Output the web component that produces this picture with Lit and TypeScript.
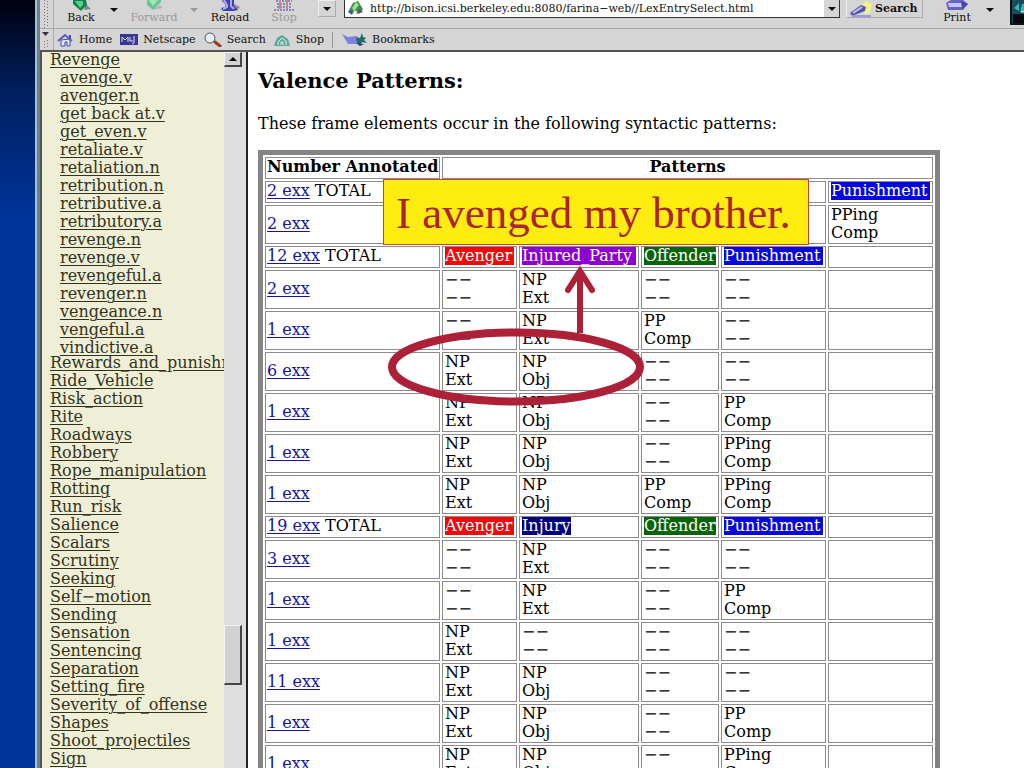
import { LitElement, html, css, svg, nothing } from "lit";
import { customElement } from "lit/decorators.js";

type Cell = string;
interface Row { count: string; total?: boolean; cells: Cell[]; }

const LEMMAS = ["avenge.v", "avenger.n", "get back at.v", "get_even.v", "retaliate.v", "retaliation.n", "retribution.n", "retributive.a", "retributory.a", "revenge.n", "revenge.v", "revengeful.a", "revenger.n", "vengeance.n", "vengeful.a", "vindictive.a"];
const FRAMES = ["Rewards_and_punishments", "Ride_Vehicle", "Risk_action", "Rite", "Roadways", "Robbery", "Rope_manipulation", "Rotting", "Run_risk", "Salience", "Scalars", "Scrutiny", "Seeking", "Self−motion", "Sending", "Sensation", "Sentencing", "Separation", "Setting_fire", "Severity_of_offense", "Shapes", "Shoot_projectiles", "Sign"];

const NONE = "−−|−−";
const ROWS: Row[] = [
  { count: "2 exx", total: true, cells: ["", "", "", "", "Punishment"] },
  { count: "2 exx", cells: ["", "", "", "", "PPing|Comp"] },
  { count: "12 exx", total: true, cells: ["Avenger", "Injured_Party", "Offender", "Punishment", ""] },
  { count: "2 exx", cells: [NONE, "NP|Ext", NONE, NONE, ""] },
  { count: "1 exx", cells: [NONE, "NP|Ext", "PP|Comp", NONE, ""] },
  { count: "6 exx", cells: ["NP|Ext", "NP|Obj", NONE, NONE, ""] },
  { count: "1 exx", cells: ["NP|Ext", "NP|Obj", NONE, "PP|Comp", ""] },
  { count: "1 exx", cells: ["NP|Ext", "NP|Obj", NONE, "PPing|Comp", ""] },
  { count: "1 exx", cells: ["NP|Ext", "NP|Obj", "PP|Comp", "PPing|Comp", ""] },
  { count: "19 exx", total: true, cells: ["Avenger", "Injury", "Offender", "Punishment", ""] },
  { count: "3 exx", cells: [NONE, "NP|Ext", NONE, NONE, ""] },
  { count: "1 exx", cells: [NONE, "NP|Ext", NONE, "PP|Comp", ""] },
  { count: "1 exx", cells: ["NP|Ext", NONE, NONE, NONE, ""] },
  { count: "11 exx", cells: ["NP|Ext", "NP|Obj", NONE, NONE, ""] },
  { count: "1 exx", cells: ["NP|Ext", "NP|Obj", NONE, "PP|Comp", ""] },
  { count: "1 exx", cells: ["NP|Ext", "NP|Obj", NONE, "PPing|Comp", ""] },
];

const caret = svg`<path d="M0 0h8l-4 4z" fill="currentColor"/>`;

@customElement("browser-toolbar")
export class BrowserToolbar extends LitElement {
  static styles = css`
    :host { display: block; background: #d5d5d5; color: #111; font: 11px/14px "DejaVu Serif", serif; border-bottom: 2px solid #555; }
    button { font: inherit; color: inherit; background: none; border: 0; padding: 0; flex: none; }
    svg { display: block; flex: none; }
    .shell { display: grid; grid-template-columns: 13px 1fr; }
    .grip { border-right: 1px solid #aaa; }
    .main { min-width: 0; }
    .nav { display: flex; height: 28px; padding-left: 12px; overflow: hidden; border-bottom: 1px solid #a8a8a8; }
    .tool { display: flex; flex-direction: column; align-items: center; height: 26px; }
    .dim { color: #999; }
    .more { align-self: flex-start; padding-top: 8px; width: 8px; margin: 0 13px; }
    .back { width: 32px; }
    .forward { width: 46px; }
    .reload { width: 38px; }
    .stop { width: 26px; margin-left: 22px; }
    .drop { display: grid; place-items: center; height: 17px; width: 18px; margin-left: 21px; border: 1px solid #aaa; border-top-color: #eee; border-left-color: #eee; box-sizing: border-box; }
    .address { display: flex; flex: 1; height: 18px; margin-left: 8px; background: #fff; border: 1px solid #333; border-top: 0; min-width: 0; box-sizing: border-box; }
    .address svg { margin: 0 3px 0 1px; }
    .address input { flex: 1; min-width: 0; border: 0; padding: 0 2px; background: none; font: 11px/16px "DejaVu Serif", serif; color: #111; outline: 0; }
    .address button { width: 15px; background: #d5d5d5; display: grid; place-items: center; }
    .address button svg { margin: 0; }
    .search { display: flex; align-items: center; gap: 2px; height: 18px; width: 77px; margin-left: 6px; border: 1px solid #aaa; border-top: 0; border-left-color: #eee; font-weight: bold; box-sizing: border-box; }
    .print { width: 32px; margin-left: 18px; }
    .logo { margin-left: 3px; }
    .links { display: flex; align-items: center; height: 21px; padding-left: 4px; }
    .links a { display: flex; align-items: center; gap: 5px; color: inherit; text-decoration: none; margin-right: 8px; }
    .sep { width: 1px; height: 16px; background: #999; margin-right: 9px; }
  `;
  render() {
    return html`
      <div class="shell">
        <svg class="grip" width="13" height="50" viewBox="0 0 13 50">
          <g fill="none" stroke="#777" stroke-dasharray="1 2"><path d="M4.500 0v28M7.500 1v27M4.500 41v7M7.500 40v8"/></g>
          <path d="M2 32h7l-3.500 4z" fill="#334"/><path d="M0 28.500h13" stroke="#a8a8a8"/>
        </svg>
        <div class="main">
          <div class="nav">
            <button class="tool back">
              <svg width="20" height="11" viewBox="0 0 20 11"><path d="m13 10 7-1-5-5z" fill="#85858f"/><path d="M10 11 2 4V0h13l1 5z" fill="#14804a"/><path d="M4 1h8v4l-3 3z" fill="#56d08a"/></svg>
              <span>Back</span></button>
            <button class="more" aria-label="Back history"><svg width="8" height="4">${caret}</svg></button>
            <button class="tool forward dim">
              <svg width="20" height="11" viewBox="0 0 20 11"><path d="m8 10 11-2-3-3z" fill="#b4b4b8"/><path d="m9 10 8-8V0H3v5z" fill="#6cc490"/><path d="M5 0h9l-5 6z" fill="#a4e6bc"/></svg>
              <span>Forward</span></button>
            <button class="more dim" aria-label="Forward history"><svg width="8" height="4">${caret}</svg></button>
            <button class="tool reload">
              <svg width="22" height="11" viewBox="0 0 22 11"><path d="M1 10h17l3-3-6-3z" fill="#8d8d9c"/><path d="M3 0c1 3 5 4 3 7L2 8l2 3h11l4-1-4-4V0z" fill="#3f3fae"/><path d="M5 0c1 3 4 4 3 7l-4 2M12 0v6l3 3" fill="none" stroke="#a9a9f4" stroke-width="2"/></svg>
              <span>Reload</span></button>
            <button class="tool stop dim">
              <svg width="22" height="11" viewBox="0 0 22 11"><path d="M3 1h16M4 4h14M4 7h14M1 10h20" stroke="#8f86b4" stroke-width="2" stroke-dasharray="2 1"/><path d="M7 0v9M14 0v9" stroke="#b98a96" stroke-width="2"/></svg>
              <span>Stop</span></button>
            <button class="drop" aria-label="Page proxy"><svg width="8" height="4">${caret}</svg></button>
            <div class="address">
              <svg width="19" height="16" viewBox="0 0 17 16"><path d="m1 12 5-9 5-2 5 8-4 5-4-4-3 5z" fill="#3c8c55"/><path d="m5 8 4-6 3 3-5 6z" fill="#9be37c"/><path d="m9 14 7-2-3-3z" fill="#556"/><path d="m1 12 4-2v4z" fill="#4c4ca8"/></svg>
              <input aria-label="Location" value="http://bison.icsi.berkeley.edu:8080/farina−web//LexEntrySelect.html">
              <button aria-label="Show history"><svg width="8" height="4">${caret}</svg></button>
            </div>
            <button class="search">
              <svg width="26" height="16" viewBox="0 0 26 16"><path d="m14 5 5-5 6 3-2 9-5 1z" fill="#f6f08a"/><path d="m3 12 11-8 5 2-1 4-13 5z" fill="#5656a8"/><path d="m6 12 9-6" stroke="#c5c5f2" stroke-width="2"/><path d="M5 15h19" stroke="#9c9cd8" stroke-width="2"/></svg>
              <span>Search</span></button>
            <button class="tool print">
              <svg width="26" height="11" viewBox="0 0 26 11"><path d="M2 3 7 0h12l5 4-5 6H4z" fill="#6464bc"/><path d="M4 3h14v4H5z" fill="#c4c4fa"/><path d="m17 1 7 3-6 5z" fill="#4646a0"/></svg>
              <span>Print</span></button>
            <button class="more" aria-label="Print options"><svg width="8" height="4">${caret}</svg></button>
            <svg class="logo" width="14" height="25" viewBox="0 0 14 25"><path d="M0 0h14v25H0z" fill="#111"/><path d="M2 0h12v23H2z" fill="#174d5c"/><path d="M3 14h11v9H3z" fill="#050a12"/><path d="m4 8 5-5v8zM12 4h2v8h-4" fill="#39b3ba"/><path d="M11 12h3" stroke="#fff"/></svg>
          </div>
          <div class="links">
            <a href="#"><svg width="17" height="14" viewBox="0 0 17 14"><path d="M4 7v6h4V9h2v4h3V6z" fill="#e4e4ff" stroke="#4b4ba6"/><path d="M1 8 8 2l7 6" fill="none" stroke="#5b5bc0" stroke-width="2"/><path d="M12 2h2v4h-2z" fill="#4b4ba6"/></svg>Home</a>
            <a href="#"><svg width="18" height="11" viewBox="0 0 18 11"><path d="M0 0h18v11H0z" fill="#383891"/><path d="M2 8V3l3 3 3-3v5M10 3v4h3M14 2v7l-2 1" fill="none" stroke="#dfe0ff"/></svg>Netscape</a>
            <a href="#"><svg width="18" height="15" viewBox="0 0 18 15"><circle cx="6" cy="6" r="5" fill="#e4eef8" stroke="#555"/><path d="m11 10 5 4" stroke="#9b3820" stroke-width="3" stroke-linecap="round"/></svg>Search</a>
            <a href="#"><svg width="17" height="14" viewBox="0 0 17 14"><path d="m0 12 3-7 5-3 6 4 2 7H1z" fill="#5fa89a"/><path d="M4 12V9l4-4 4 3v4M7 12V9h2v3" fill="none" stroke="#dff4ee"/></svg>Shop</a>
            <span class="sep"></span>
            <a href="#"><svg width="25" height="15" viewBox="0 0 25 15"><path d="m0 2 6 3 9-1v8H6z" fill="#8181e2"/><path d="m14 5 4 1 2-5 1 4 3 1-2 2 3 3-5-1-2 4-3-3z" fill="#1f6c68"/><path d="m14 11 8 1-4 2z" fill="#34348a"/></svg>Bookmarks</a>
          </div>
        </div>
      </div>`;
  }
}

@customElement("frame-index")
export class FrameIndex extends LitElement {
  static styles = css`
    :host { display: grid; grid-template-columns: 1fr 18px; background: #efefd8; border-left: 2px solid #555; border-right: 4px solid #dedede; overflow: hidden; font: 16px/18px "DejaVu Serif", serif; }
    nav { overflow: hidden; padding-left: 8px; white-space: nowrap; }
    ul { list-style: none; margin: 0; padding: 0; }
    nav > ul { margin-top: -1px; }
    .lemmas { padding-left: 10px; margin-bottom: -3px; }
    a { color: #33331a; text-underline-offset: 2px; text-decoration-thickness: 1px; }
    .bar { display: grid; grid-template-rows: 15px 1fr 60px 83px; background: #dedede; }
    .bar button, .thumb { background: #d2d2d2; border: 1px solid #f4f4f4; border-right: 2px solid #444; border-bottom: 2px solid #444; padding: 0; display: grid; place-items: center; box-sizing: border-box; }
    .thumb { grid-row: 3; }
  `;
  render() {
    return html`
      <nav><ul>
        <li><a href="#">Revenge</a>
          <ul class="lemmas">${LEMMAS.map((l) => html`<li><a href="#">${l}</a></li>`)}</ul></li>
        ${FRAMES.map((f) => html`<li><a href="#">${f}</a></li>`)}
      </ul></nav>
      <div class="bar"><button aria-label="Scroll up"><svg width="8" height="4"><path d="M0 4h8L4 0z"/></svg></button><div class="thumb"></div></div>`;
  }
}

@customElement("valence-page")
export class ValencePage extends LitElement {
  static styles = css`
    :host { display: block; background: #fff; color: #000; overflow: hidden; padding: 17px 10px 0; font: 16px/18px "DejaVu Serif", serif; }
    h1 { font-size: 21px; line-height: 24px; margin: 0 0 22px; }
    p { margin: 0 0 17px; }
    table { table-layout: fixed; width: 682px; border: 5px solid #848484; border-spacing: 2px; border-collapse: separate; }
    th, td { border: 1px solid #8c8c8c; padding: 0 1px 2px; overflow: hidden; white-space: nowrap; text-align: left; }
    th { text-align: center; }
    .c0 { width: 175px; } .c1 { width: 75px; } .c2 { width: 120px; } .c3 { width: 78px; } .c4 { width: 105px; }
    a { color: #1414a0; text-underline-offset: 2px; text-decoration-thickness: 1px; }
    .tag { display: block; color: #fff; height: 18px; margin: 0 1px; }
    .Avenger { background: #ee0a0a; }
    .Injured_Party { background: #8c00d0; }
    .Offender { background: #0b640b; }
    .Punishment { background: #0808dc; }
    .Injury { background: #00007c; width: fit-content; }
    td.pair { padding: 0 1px 1px 2px; }
  `;
  cell(text: string, total?: boolean) {
    if (!text) return html`<td></td>`;
    if (total) return html`<td><span class="tag ${text}">${text}</span></td>`;
    const [a, b] = text.split("|");
    return html`<td class="pair">${a}<br>${b}</td>`;
  }
  render() {
    return html`
      <h1>Valence Patterns:</h1>
      <p>These frame elements occur in the following syntactic patterns:</p>
      <table>
        <colgroup><col class="c0"><col class="c1"><col class="c2"><col class="c3"><col class="c4"><col class="c4"></colgroup>
        <thead><tr><th>Number Annotated</th><th colspan="5">Patterns</th></tr></thead>
        <tbody>${ROWS.map((r) => html`<tr><td><a href="#">${r.count}</a>${r.total ? " TOTAL" : nothing}</td>${r.cells.map((c) => this.cell(c, r.total))}</tr>`)}</tbody>
      </table>`;
  }
}

@customElement("app-root")
export class AppRoot extends LitElement {
  static styles = css`
    :host { display: grid; grid-template-columns: 35px 1fr; height: 100vh; overflow: hidden; position: relative; }
    .slide { background: linear-gradient(#000010, #00205f 12%, #003399 28%); }
    .window { display: grid; grid-template-rows: auto 1fr; min-width: 0; min-height: 0; border-left: 2px solid #9cc4d4; box-shadow: inset 3px 0 #708088; padding-left: 3px; }
    .panes { display: grid; grid-template-columns: 206px 1fr; min-height: 0; }
    valence-page { border-left: 2px solid #222; }
    .callout { position: absolute; left: 383px; top: 179px; box-sizing: border-box; height: 66px; padding: 0 17px 0 12px; border: 1px solid #c8442c; background: #ffed10; color: #ac2434; font: 45px/66px "Liberation Serif", serif; white-space: nowrap; }
    .marks { position: absolute; left: 384px; top: 262px; fill: none; stroke: #ac2038; }
  `;
  render() {
    return html`
      <div class="slide"></div>
      <div class="window">
        <browser-toolbar></browser-toolbar>
        <div class="panes"><frame-index></frame-index><valence-page></valence-page></div>
      </div>
      <div class="callout">I avenged my brother.</div>
      <svg class="marks" width="264" height="148" viewBox="0 0 264 148">
        <ellipse cx="132" cy="105" rx="124" ry="34.500" stroke-width="8"/>
        <path d="M196 71V8" stroke-width="6"/>
        <path d="M184 28l12-19 12 19" stroke-width="6" stroke-linejoin="miter" stroke-linecap="round"/>
      </svg>`;
  }
}
